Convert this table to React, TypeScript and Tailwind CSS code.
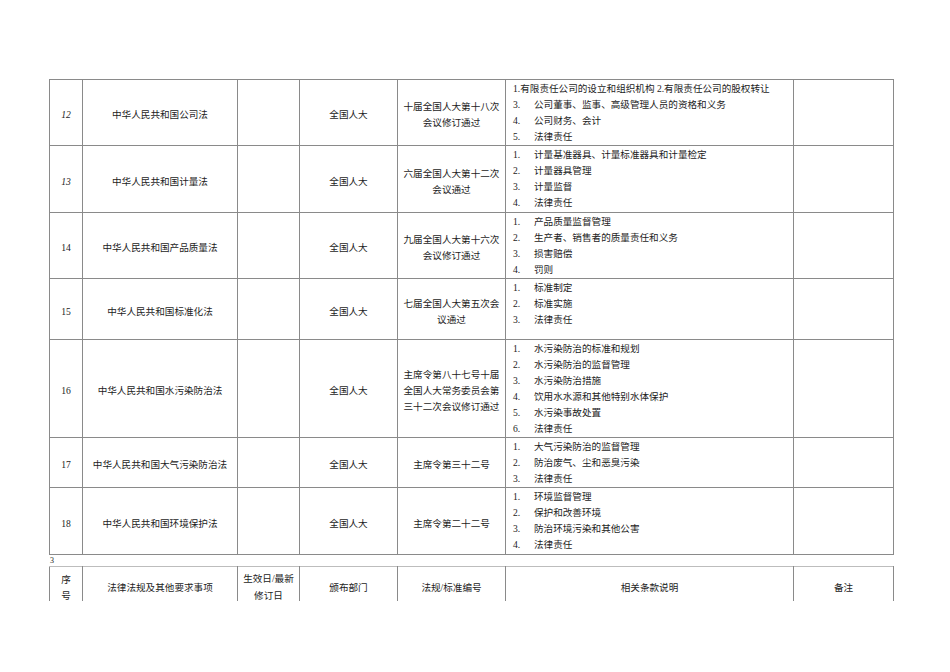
import React from 'react';

type Row = {
  no: string;
  italic?: boolean;
  name: string;
  dept: string;
  code: string[];
  items: { n: string; t: string }[];
  first?: string;
  h: string;
};

const rows: Row[] = [
  {
    no: '12',
    italic: true,
    name: '中华人民共和国公司法',
    dept: '全国人大',
    code: ['十届全国人大第十八次', '会议修订通过'],
    first: '1.有限责任公司的设立和组织机构 2.有限责任公司的股权转让',
    items: [
      { n: '3.', t: '公司董事、监事、高级管理人员的资格和义务' },
      { n: '4.', t: '公司财务、会计' },
      { n: '5.', t: '法律责任' },
    ],
    h: 'h-[65px]',
  },
  {
    no: '13',
    italic: true,
    name: '中华人民共和国计量法',
    dept: '全国人大',
    code: ['六届全国人大第十二次', '会议通过'],
    items: [
      { n: '1.', t: '计量基准器具、计量标准器具和计量检定' },
      { n: '2.', t: '计量器具管理' },
      { n: '3.', t: '计量监督' },
      { n: '4.', t: '法律责任' },
    ],
    h: 'h-[67px]',
  },
  {
    no: '14',
    name: '中华人民共和国产品质量法',
    dept: '全国人大',
    code: ['九届全国人大第十六次', '会议修订通过'],
    items: [
      { n: '1.', t: '产品质量监督管理' },
      { n: '2.', t: '生产者、销售者的质量责任和义务' },
      { n: '3.', t: '损害赔偿' },
      { n: '4.', t: '罚则' },
    ],
    h: 'h-[65px]',
  },
  {
    no: '15',
    name: '中华人民共和国标准化法',
    dept: '全国人大',
    code: ['七届全国人大第五次会', '议通过'],
    items: [
      { n: '1.', t: '标准制定' },
      { n: '2.', t: '标准实施' },
      { n: '3.', t: '法律责任' },
    ],
    h: 'h-[61px]',
  },
  {
    no: '16',
    name: '中华人民共和国水污染防治法',
    dept: '全国人大',
    code: ['主席令第八十七号十届', '全国人大常务委员会第', '三十二次会议修订通过'],
    items: [
      { n: '1.', t: '水污染防治的标准和规划' },
      { n: '2.', t: '水污染防治的监督管理' },
      { n: '3.', t: '水污染防治措施' },
      { n: '4.', t: '饮用水水源和其他特别水体保护' },
      { n: '5.', t: '水污染事故处置' },
      { n: '6.', t: '法律责任' },
    ],
    h: 'h-[97px]',
  },
  {
    no: '17',
    name: '中华人民共和国大气污染防治法',
    dept: '全国人大',
    code: ['主席令第三十二号'],
    items: [
      { n: '1.', t: '大气污染防治的监督管理' },
      { n: '2.', t: '防治废气、尘和恶臭污染' },
      { n: '3.', t: '法律责任' },
    ],
    h: 'h-[49px]',
  },
  {
    no: '18',
    name: '中华人民共和国环境保护法',
    dept: '全国人大',
    code: ['主席令第二十二号'],
    items: [
      { n: '1.', t: '环境监督管理' },
      { n: '2.', t: '保护和改善环境' },
      { n: '3.', t: '防治环境污染和其他公害' },
      { n: '4.', t: '法律责任' },
    ],
    h: 'h-[67px]',
  },
];

const cell = 'border border-[#8a8a8a] text-center align-middle pt-[5px] leading-[16px]';

function Cols() {
  return (
    <colgroup>
      <col className="w-[33px]" />
      <col className="w-[155px]" />
      <col className="w-[62px]" />
      <col className="w-[98px]" />
      <col className="w-[108px]" />
      <col className="w-[288px]" />
      <col className="w-[100px]" />
    </colgroup>
  );
}

export default function App() {
  return (
    <div
      className="w-[950px] h-[672px] overflow-hidden bg-white text-[#1c1c1c] text-[9.6px] pl-[49px] pt-[79px]"
      style={{ fontFamily: '"Liberation Serif", "Noto Sans CJK SC", serif' }}
    >
      <table className="table-fixed border-collapse w-[844px] border-t border-t-[#c4c4c4]">
        <Cols />
        <tbody>
          {rows.map((r) => (
            <tr key={r.no} className={r.h}>
              <td className={`${cell} ${r.italic ? 'italic' : ''}`}>{r.no}</td>
              <td className={cell}>{r.name}</td>
              <td className={cell}></td>
              <td className={cell}>{r.dept}</td>
              <td className={`${cell} pt-[3px]`}>
                {r.code.map((c) => (
                  <div key={c}>{c}</div>
                ))}
              </td>
              <td className="border border-[#8a8a8a] align-top text-left pl-[7px] pt-[1px] pb-0 leading-[16px]">
                {r.first && <div className="whitespace-nowrap">{r.first}</div>}
                {r.items.map((it) => (
                  <div key={it.n} className="flex whitespace-nowrap">
                    <span className="w-[21px] shrink-0">{it.n}</span>
                    <span>{it.t}</span>
                  </div>
                ))}
              </td>
              <td className="border border-[#8a8a8a]"></td>
            </tr>
          ))}
        </tbody>
      </table>

      <div className="h-[11px] text-[8px] leading-[11px] pl-[1px]">3</div>

      <div className="h-[35px] overflow-hidden">
        <table className="table-fixed border-collapse w-[844px]">
          <Cols />
          <tbody>
            <tr className="h-[44px]">
              <td className="border border-[#8a8a8a] border-t-[#bdbdbd] text-center align-top pt-[5px] leading-[16px]">
                <div>序</div>
                <div>号</div>
              </td>
              <td className="border border-[#8a8a8a] border-t-[#bdbdbd] text-center align-top pt-[13px] leading-[16px]">
                法律法规及其他要求事项
              </td>
              <td className="border border-[#8a8a8a] border-t-[#bdbdbd] text-center align-top pt-[3px] leading-[17px]">
                <div>生效日/最新</div>
                <div>修订日</div>
              </td>
              <td className="border border-[#8a8a8a] border-t-[#bdbdbd] text-center align-top pt-[13px] leading-[16px]">
                颁布部门
              </td>
              <td className="border border-[#8a8a8a] border-t-[#bdbdbd] text-center align-top pt-[13px] leading-[16px]">
                法规/标准编号
              </td>
              <td className="border border-[#8a8a8a] border-t-[#bdbdbd] text-center align-top pt-[13px] leading-[16px]">
                相关条款说明
              </td>
              <td className="border border-[#8a8a8a] border-t-[#bdbdbd] text-center align-top pt-[13px] leading-[16px]">
                备注
              </td>
            </tr>
          </tbody>
        </table>
      </div>
    </div>
  );
}
